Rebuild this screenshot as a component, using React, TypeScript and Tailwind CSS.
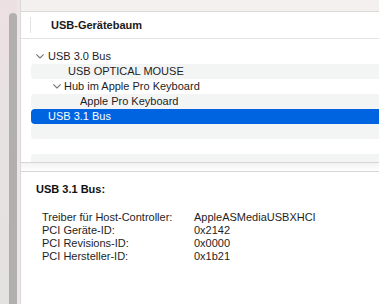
import React from 'react';

type Row = {
  label?: string;
  textX?: number;
  chevronX?: number;
  selected?: boolean;
};

// x positions are measured from the left edge of the tree rows (x = 31)
const rows: Row[] = [
  { label: 'USB 3.0 Bus', textX: 17, chevronX: 5 },
  { label: 'USB OPTICAL MOUSE', textX: 37 },
  { label: 'Hub im Apple Pro Keyboard', textX: 33, chevronX: 22 },
  { label: 'Apple Pro Keyboard', textX: 49 },
  { label: 'USB 3.1 Bus', textX: 17, selected: true },
  {},
  {},
  {},
];

const details = [
  ['Treiber für Host-Controller:', 'AppleASMediaUSBXHCI'],
  ['PCI Geräte-ID:', '0x2142'],
  ['PCI Revisions-ID:', '0x0000'],
  ['PCI Hersteller-ID:', '0x1b21'],
];

const Chevron = () => (
  <svg width="8" height="5" viewBox="0 0 8 5" className="block">
    <path d="M0.6 0.6 L4 4 L7.4 0.6" fill="none" stroke="#7a7a7a" strokeWidth="1.1" strokeLinecap="round" strokeLinejoin="round" />
  </svg>
);

export default function App() {
  return (
    <div className="flex w-[379px] h-[304px] overflow-hidden bg-white font-['Liberation_Sans',Arial,sans-serif] text-[11px] text-[#1e1e1e]">
      {/* Sidebar edge with scroll thumb */}
      <div className="flex w-[21px] shrink-0 bg-gradient-to-b from-[#ede0e2] via-[#e6e2e2] to-[#e4e1e1] border-r border-[#dcd8d8]">
        <div className="w-[9px]" />
        <div className="w-[8px] mt-[13px] rounded-t-full bg-[#b2b0af]" />
        <div className="flex-1 bg-[#e9e7e7]" />
      </div>

      {/* Main pane */}
      <div className="flex flex-col flex-1 min-w-0">
        <div className="h-[12px] shrink-0 bg-[#f5f0f0] border-b border-[#dcd8d8]" />

        {/* Column header */}
        <div className="flex items-center h-[27px] shrink-0 border-b border-[#e3e3e3]">
          <div className="ml-[9px] w-px h-[16px] bg-[#e2e2e2]" />
          <span className="ml-[20px] font-bold text-[#1a1a1a]">USB-Gerätebaum</span>
        </div>

        {/* Tree */}
        <div className="h-[123px] shrink-0 overflow-hidden pt-[10px] pl-[10px]">
          {rows.map((r, i) => (
            <div
              key={i}
              className={`relative flex items-center h-[15px] rounded-l-[4px] ${
                r.selected ? 'bg-[#0064e1] text-white' : i % 2 === 1 ? 'bg-[#f3f4f4]' : ''
              }`}
            >
              {r.chevronX !== undefined && (
                <span className="absolute top-[5px]" style={{ left: r.chevronX }}>
                  <Chevron />
                </span>
              )}
              {r.label && (
                <span className="whitespace-nowrap" style={{ paddingLeft: r.textX }}>
                  {r.label}
                </span>
              )}
            </div>
          ))}
        </div>

        {/* Splitter */}
        <div className="h-[10px] shrink-0 border-y border-[#d6d6d6] bg-gradient-to-b from-[#f2f2f2] to-white" />

        {/* Detail pane */}
        <div className="flex-1 pt-[10px] pl-[15px]">
          <div className="font-bold leading-[15px] text-[#111]">USB 3.1 Bus:</div>
          <div className="mt-[14px] pl-[6px]">
            {details.map(([k, v]) => (
              <div key={k} className="flex leading-[13px]">
                <span className="w-[152px] shrink-0">{k}</span>
                <span>{v}</span>
              </div>
            ))}
          </div>
        </div>
      </div>
    </div>
  );
}
